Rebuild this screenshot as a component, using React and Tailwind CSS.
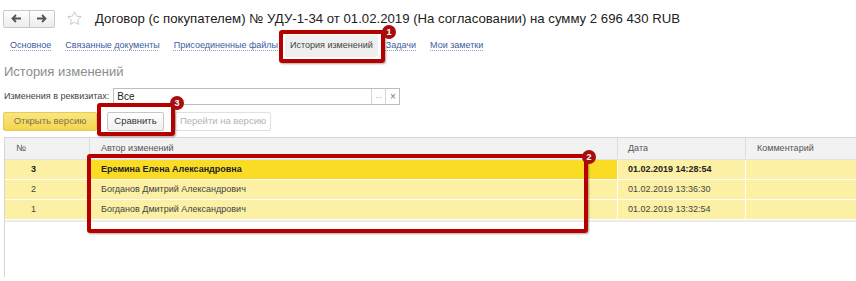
import React from "react";

const tabs = [
  { label: "Основное" },
  { label: "Связанные документы" },
  { label: "Присоединенные файлы" },
  { label: "История изменений", active: true },
  { label: "Задачи" },
  { label: "Мои заметки" },
];

const rows = [
  { n: 3, author: "Еремина Елена Александровна", date: "01.02.2019 14:28:54", current: true },
  { n: 2, author: "Богданов Дмитрий Александрович", date: "01.02.2019 13:36:30" },
  { n: 1, author: "Богданов Дмитрий Александрович", date: "01.02.2019 13:32:54" },
];

// красная рамка-выноска с номером
function Callout({ box, badge, n }) {
  return (
    <>
      <div
        className="absolute border-[4px] border-[#b60000] rounded-[3px] shadow-[1px_1px_2px_rgba(0,0,0,0.35)]"
        style={box}
      />
      <div
        className="absolute w-[14px] h-[14px] rounded-full bg-[#a80d0d] text-white text-[9px] font-bold flex items-center justify-center leading-none"
        style={badge}
      >
        {n}
      </div>
    </>
  );
}

export default function App() {
  return (
    <div className="relative w-[856px] h-[281px] overflow-hidden bg-white text-[#333] font-['Liberation_Sans',Arial,sans-serif]">
      {/* === Заголовок === */}
      <div className="flex items-center h-[19px] mt-[9px] pl-[3px]">
        <div className="flex h-[18px] w-[52px] border border-[#c8c8c8] rounded-[2px] bg-gradient-to-b from-white to-[#ececec]">
          <div className="flex-1 flex items-center justify-center border-r border-[#c8c8c8]">
            <svg width="11" height="9" viewBox="0 0 11 9">
              <path d="M10 4.5H2M5 1L1.5 4.5L5 8" stroke="#555" strokeWidth="1.8" fill="none" />
            </svg>
          </div>
          <div className="flex-1 flex items-center justify-center">
            <svg width="11" height="9" viewBox="0 0 11 9">
              <path d="M1 4.5H9M6 1L9.5 4.5L6 8" stroke="#555" strokeWidth="1.8" fill="none" />
            </svg>
          </div>
        </div>
        <svg className="ml-[11px]" width="17" height="17" viewBox="0 0 24 24">
          <path
            d="M12 2.5l2.9 6.2 6.6.7-5 4.5 1.4 6.6L12 17.2l-5.9 3.3 1.4-6.6-5-4.5 6.6-.7z"
            fill="none"
            stroke="#c4c4c4"
            strokeWidth="1.3"
          />
        </svg>
        <div className="ml-[12px] text-[13.2px] text-[#222] whitespace-nowrap">
          Договор (с покупателем) № УДУ-1-34 от 01.02.2019 (На согласовании) на сумму 2 696 430 RUB
        </div>
      </div>

      {/* === Вкладки === */}
      <div className="flex items-center h-[22px] mt-[7px] pl-[3px] text-[9px]">
        {tabs.map((t) =>
          t.active ? (
            <div key={t.label} className="h-[22px] px-[5px] flex items-center bg-[#efefef] rounded-[3px] text-[#444] mr-[1px]">
              {t.label}
            </div>
          ) : (
            <div key={t.label} className="px-[7px] text-[#3c5d9e] underline decoration-dotted decoration-[#8ea2c8] underline-offset-2">
              {t.label}
            </div>
          )
        )}
      </div>

      {/* === История изменений === */}
      <div className="pl-[4px] mt-[5px] h-[20px] text-[13px] text-[#8c8c8c] leading-[20px]">История изменений</div>

      <div className="flex items-center h-[17px] mt-[6px] pl-[4px] text-[9px]">
        <span className="text-[#444] mr-[4px]">Изменения в реквизитах:</span>
        <div className="flex w-[287px] h-[17px] border border-[#bdbdbd] bg-white">
          <div className="flex-1 pl-[3px] leading-[15px] text-[#222] text-[10px]">Все</div>
          <div className="w-[14px] border-l border-[#d4d4d4] text-[8px] text-[#999] flex items-end justify-center pb-[2px]">...</div>
          <div className="w-[14px] border-l border-[#d4d4d4] text-[10px] text-[#777] flex items-center justify-center">×</div>
        </div>
      </div>

      <div className="flex items-center h-[19px] mt-[7px] pl-[3px] text-[9.5px]">
        <div className="h-[19px] w-[94px] flex items-center justify-center rounded-[2px] border border-[#e3cc55] bg-gradient-to-b from-[#fae680] to-[#f4d64c] text-[#7f7444]">
          Открыть версию
        </div>
        <div className="ml-[10px] h-[19px] w-[57px] flex items-center justify-center rounded-[2px] border border-[#c6c6c6] bg-gradient-to-b from-white to-[#f0f0f0] text-[#333]">
          Сравнить
        </div>
        <div className="ml-[11px] h-[19px] w-[96px] flex items-center justify-center rounded-[2px] border border-[#e0e0e0] bg-white text-[#b4b4b4]">
          Перейти на версию
        </div>
      </div>

      {/* === Таблица === */}
      <div className="ml-[4px] mt-[6px] h-[140px] border-l border-t border-[#d6d6d6] text-[9px]">
        <div className="flex h-[22px] bg-[#f2f2f2] border-b border-[#e2e2e2] text-[#555]">
          <div className="w-[85px] pl-[11px] flex items-center border-r border-[#dcdcdc]">№</div>
          <div className="w-[528px] pl-[11px] flex items-center border-r border-[#dcdcdc]">Автор изменений</div>
          <div className="w-[128px] pl-[10px] flex items-center border-r border-[#dcdcdc]">Дата</div>
          <div className="flex-1 pl-[11px] flex items-center">Комментарий</div>
        </div>
        {rows.map((r) => (
          <div
            key={r.n}
            className={`flex h-[20px] bg-[#fcf0a4] border-b border-white ${r.current ? "font-bold text-[#222]" : "text-[#444]"}`}
          >
            <div className="w-[85px] pl-[26px] flex items-center border-r border-white">{r.n}</div>
            <div className={`w-[528px] pl-[11px] flex items-center border-r border-white ${r.current ? "bg-[#fbdc25]" : ""}`}>
              {r.author}
            </div>
            <div className="w-[128px] pl-[10px] flex items-center border-r border-white">{r.date}</div>
            <div className="flex-1" />
          </div>
        ))}
        <div className="h-[2px] bg-[#ececec]" />
      </div>

      {/* === Выноски === */}
      <Callout n="1" box={{ left: 279, top: 30, width: 106, height: 33 }} badge={{ left: 382, top: 25 }} />
      <Callout n="3" box={{ left: 97, top: 103, width: 78, height: 33 }} badge={{ left: 170, top: 96 }} />
      <Callout n="2" box={{ left: 87, top: 154, width: 501, height: 79 }} badge={{ left: 582, top: 150 }} />
    </div>
  );
}
